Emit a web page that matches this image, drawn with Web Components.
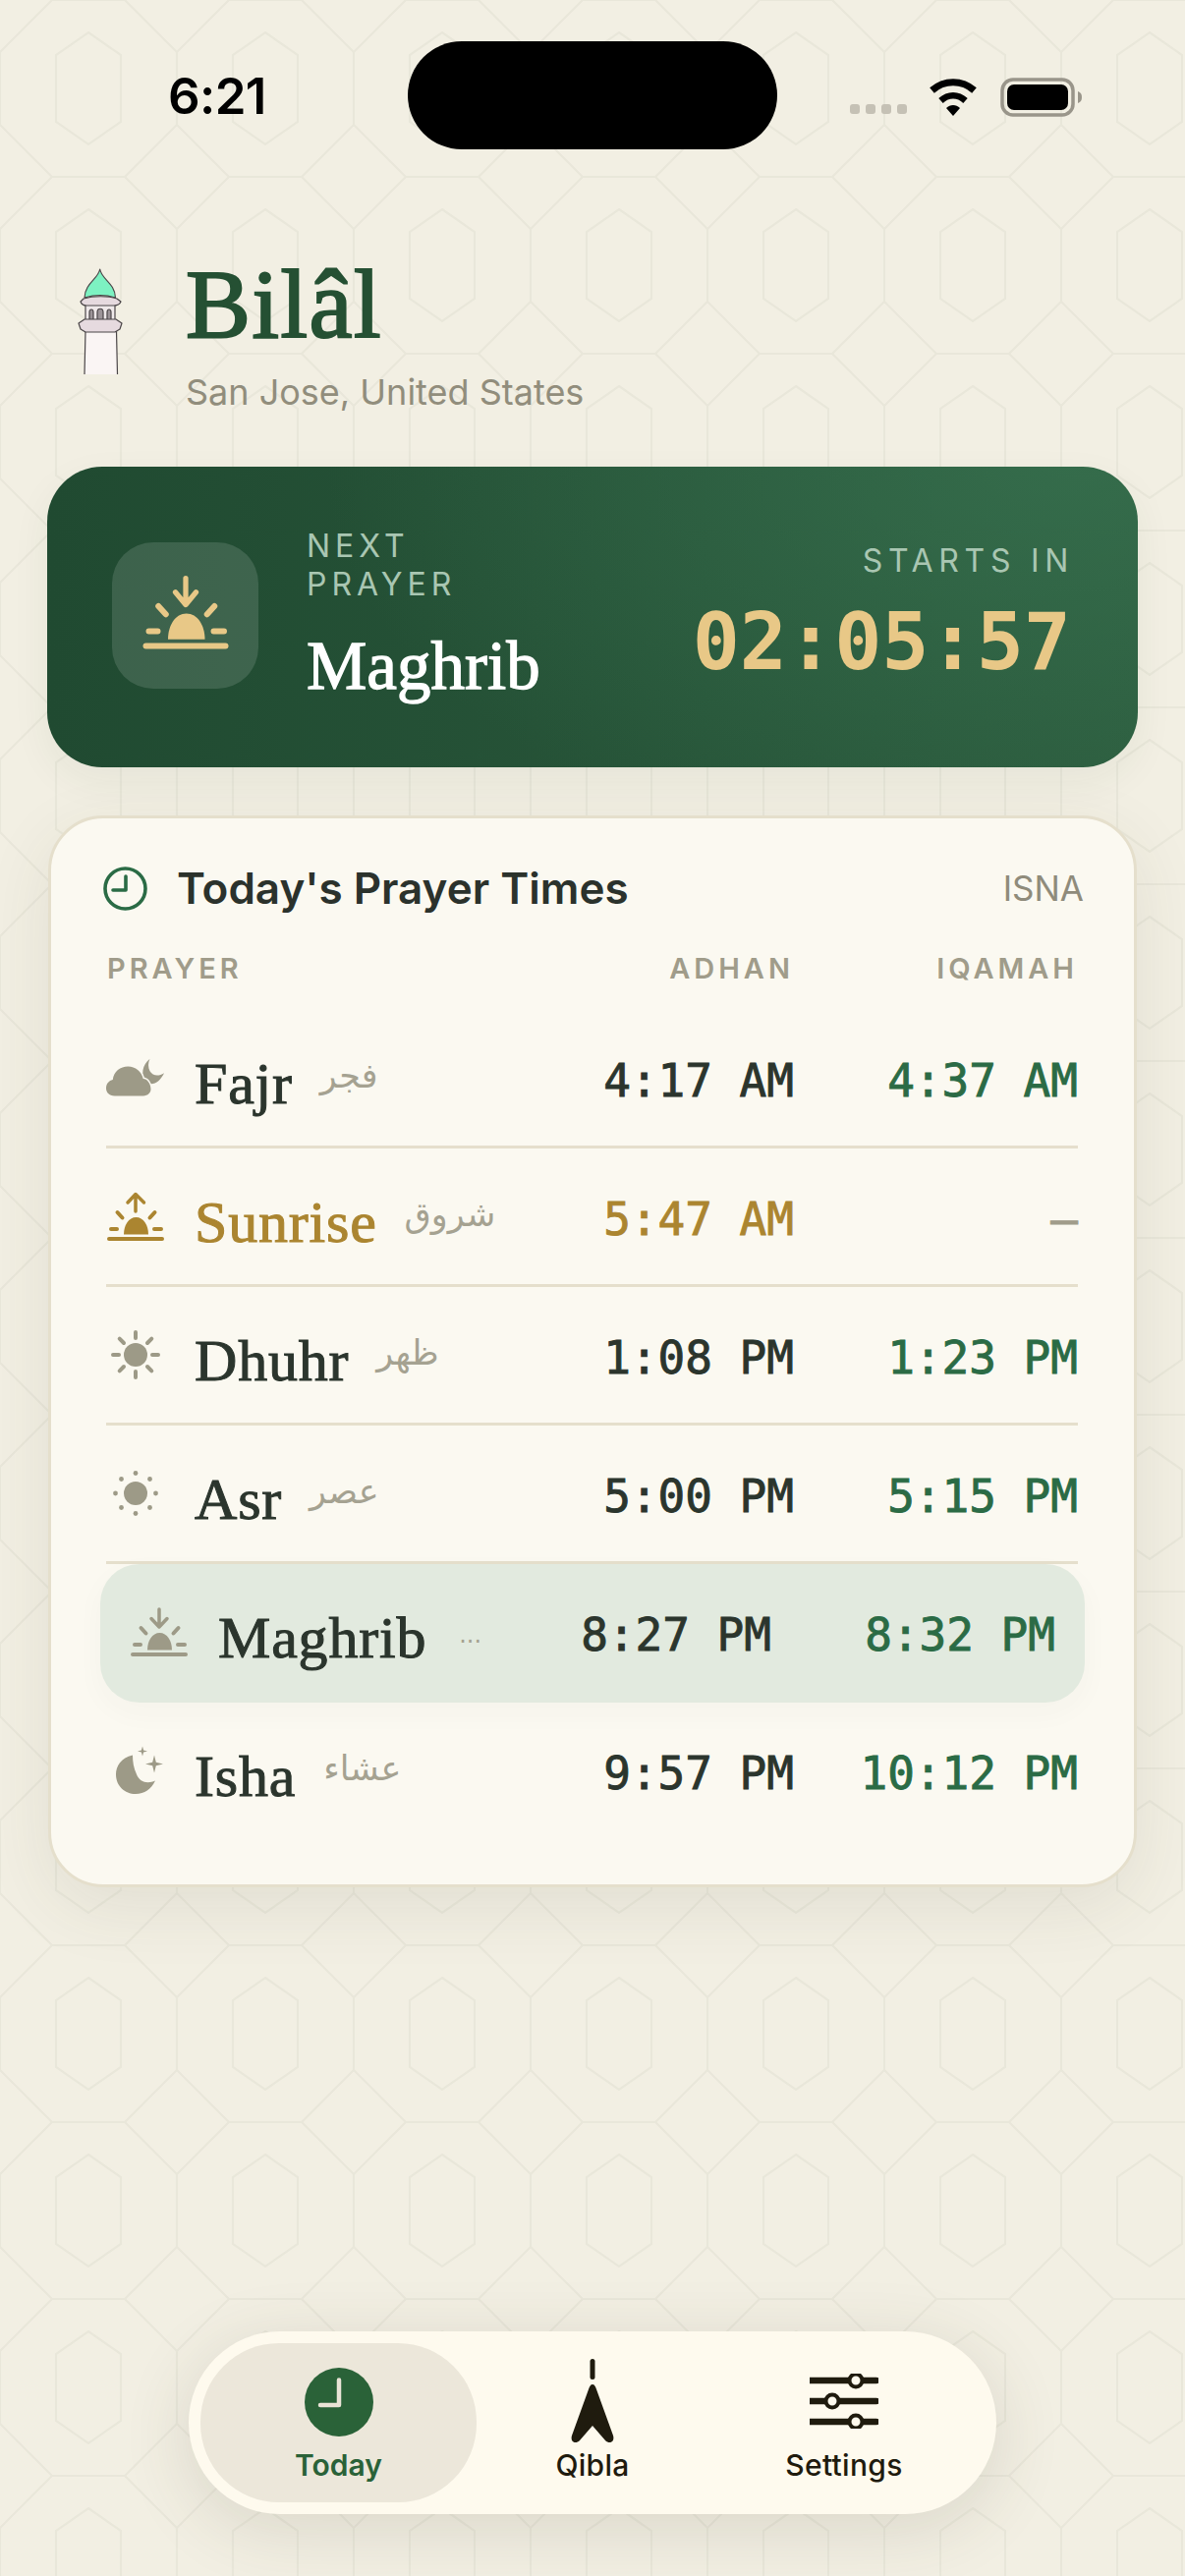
<!DOCTYPE html>
<html lang="en">
<head>
<meta charset="utf-8">
<title>Bilal</title>
<style>
    html, body { margin: 0; padding: 0; }
    body {
        width: 1206px;
        height: 2622px;
        overflow: hidden;
        background-color: #f2efe3;
        background-image: url("data:image/svg+xml,%3Csvg xmlns='http://www.w3.org/2000/svg' width='180' height='180'%3E%3Cpath d='M53 0H127L180 53V127L127 180H53L0 127V53Z M90 33L123 56V124L90 147L57 124V56Z' fill='none' stroke='%23e9e7da' stroke-width='2.2'/%3E%3C/svg%3E");
        font-family: Inter, "Liberation Sans", sans-serif;
    }
</style>
</head>
<body>
    <app-screen>
        <status-bar></status-bar>
        <app-header title="Bilâl" location="San Jose, United States"></app-header>
        <next-prayer name="Maghrib" countdown="02:05:57"></next-prayer>
        <prayer-card title="Today's Prayer Times" method="ISNA">
            <prayer-row icon="fajr" name="Fajr" arabic="فجر" adhan="4:17 AM" iqamah="4:37 AM"></prayer-row>
            <prayer-row icon="sunrise" name="Sunrise" arabic="شروق" adhan="5:47 AM" iqamah="—" accent></prayer-row>
            <prayer-row icon="dhuhr" name="Dhuhr" arabic="ظهر" adhan="1:08 PM" iqamah="1:23 PM"></prayer-row>
            <prayer-row icon="asr" name="Asr" arabic="عصر" adhan="5:00 PM" iqamah="5:15 PM"></prayer-row>
            <prayer-row icon="sunset" name="Maghrib" arabic="..." adhan="8:27 PM" iqamah="8:32 PM" active></prayer-row>
            <prayer-row icon="isha" name="Isha" arabic="عشاء" adhan="9:57 PM" iqamah="10:12 PM" last></prayer-row>
        </prayer-card>
        <bottom-nav>
            <nav-tab label="Today" icon="today" active style="width:281px"></nav-tab>
            <nav-tab label="Qibla" icon="qibla" style="width:236px"></nav-tab>
            <nav-tab label="Settings" icon="settings" style="width:276px"></nav-tab>
        </bottom-nav>
    </app-screen>

<script>
;(function(document){
    'use strict';

    const SERIF = '"Liberation Serif", "Times New Roman", serif';
    const MONO = '"DejaVu Sans Mono", "Liberation Mono", monospace';

    //sun glyph shared by sunrise, maghrib and the hero card
    const sunParts = `
        <path d="M3 49H57" stroke-width="4"/>
        <path d="M18 44.5C18 35 23 27 30.5 27S43 35 43 44.5Z" fill="currentColor" stroke="none"/>
        <path d="M5 39H11M49 39H56M11.500 22L16.500 27.500M49.500 22L44.500 27.500" stroke-width="4"/>
    `;

    const ICONS = {
        fajr: `<svg viewBox="0 0 62 52"><g fill="currentColor">
            <path d="M46 6C38 12 36 24 42 30C48 36 57 30 61 21C55 25 49 24 46 19C44 15 44 10 46 6Z"/>
            <path d="M9 45C3 45 0 41 0 37C0 32 3 29 7 28C8 19 15 14 23 14C31 14 37 19 39 27C43 27 47 32 47 38C47 42 44 45 39 45Z" stroke="#fbf9f1" stroke-width="3" paint-order="stroke"/>
        </g></svg>`,
        sunrise: `<svg viewBox="0 0 60 52" fill="none" stroke="currentColor" stroke-linecap="round" stroke-linejoin="round">
            ${sunParts}<path d="M30 21V4M22 12L30 3.500L38.500 12" stroke-width="3.500"/></svg>`,
        sunset: `<svg viewBox="0 0 60 52" fill="none" stroke="currentColor" stroke-linecap="round" stroke-linejoin="round">
            ${sunParts}<path d="M30 3V20M22 12.500L30 21L38 12.500" stroke-width="3.500"/></svg>`,
        dhuhr: `<svg viewBox="0 0 60 52" fill="none" stroke="currentColor" stroke-width="4" stroke-linecap="round">
            <circle cx="30" cy="26" r="12" fill="currentColor" stroke="none"/>
            <path d="M30 3V9M30 43V49M7 26H13M47 26H53M13.700 9.700L18 14M46.300 9.700L42 14M13.700 42.300L18 38M46.300 42.300L42 38"/></svg>`,
        asr: `<svg viewBox="0 0 60 52" fill="currentColor">
            <circle cx="30" cy="26" r="12"/>
            <circle cx="30" cy="5.500" r="2.400"/><circle cx="30" cy="46.500" r="2.400"/>
            <circle cx="9.500" cy="26" r="2.400"/><circle cx="50.500" cy="26" r="2.400"/>
            <circle cx="15.500" cy="11.500" r="2.400"/><circle cx="44.500" cy="11.500" r="2.400"/>
            <circle cx="15.500" cy="40.500" r="2.400"/><circle cx="44.500" cy="40.500" r="2.400"/></svg>`,
        isha: `<svg viewBox="0 0 60 52" fill="currentColor">
            <path d="M27 10.500C15 13 10 22 10 30C10 42 19 50 30 50C39 50 46 45 50 36.500C42 40 34 38 31 30C28 24 27 17 27 10.500Z"/>
            <path d="M49 10.500L50.800 17.700L58 19.500L50.800 21.300L49 28.500L47.200 21.300L40 19.500L47.200 17.700Z"/>
            <path d="M37 1.500L38.100 5.400L42 6.500L38.100 7.600L37 11.500L35.900 7.600L32 6.500L35.900 5.400Z"/></svg>`,
        today: `<svg viewBox="0 0 70 70"><circle cx="35" cy="35" r="35" fill="#2a6238"/>
            <path d="M35 12.500V38H16" fill="none" stroke="#e9e4d6" stroke-width="4.500" stroke-linecap="round" stroke-linejoin="round"/></svg>`,
        qibla: `<svg viewBox="0 0 70 90" fill="#1f1b0e">
            <rect x="32.500" y="0" width="5" height="21" rx="2.500"/>
            <path d="M35 26C37 26 38 28 39 31L56 78C58 85 52 87 48 83L35 68L22 83C18 87 12 85 14 78L31 31C32 28 33 26 35 26Z"/></svg>`,
        settings: `<svg viewBox="0 0 70 56" fill="none" stroke="#1f1b0e" stroke-linecap="round">
            <path d="M1 7H68M1 28H68M1 49H68" stroke-width="6.500"/>
            <g fill="#fefaee" stroke-width="4"><ellipse cx="47" cy="7" rx="6.500" ry="6.500"/><ellipse cx="23" cy="28" rx="6.500" ry="6.500"/><ellipse cx="47" cy="49" rx="6.500" ry="6.500"/></g></svg>`
    };

    class AppScreen extends HTMLElement {
        constructor(){
            super();
            this.attachShadow({ mode: 'open' }).innerHTML = `
                <style>
                    :host {
                        display: flex;
                        flex-direction: column;
                        width: 1206px;
                        height: 2622px;
                        box-sizing: border-box;
                    }
                </style>
                <slot></slot>
            `;
        }
    }

    class StatusBar extends HTMLElement {
        constructor(){
            super();
            this.attachShadow({ mode: 'open' }).innerHTML = `
                <style>
                    :host {
                        display: flex;
                        align-items: center;
                        height: 110px;
                        margin-top: 42px;
                        padding-left: 171px;
                        font-family: Inter, "Liberation Sans", sans-serif;
                    }
                    .time { width: 244px; font-size: 51px; font-weight: 600; color: #000; letter-spacing: -0.6px; }
                    .island { width: 376px; height: 110px; border-radius: 55px; background: #000; }
                    .signal { display: flex; gap: 6px; margin: 27px 0 0 74px; }
                    .signal i { width: 10px; height: 10px; border-radius: 3px; background: #c5c1b5; }
                    svg { display: block; margin: 4px 0 0 0; }
                    .wifi { margin-left: 22px; }
                    .battery { margin-left: 23px; }
                </style>
                <div class="time">6:21</div>
                <div class="island"></div>
                <div class="signal"><i></i><i></i><i></i><i></i></div>
                <svg class="wifi" width="50" height="38" viewBox="0 0 50 38">
                    <path d="M3.500 12C16 1 34 1 46.500 12" fill="none" stroke="#000" stroke-width="7"/>
                    <path d="M12.500 22.500C20 15.500 30 15.500 37.500 22.500" fill="none" stroke="#000" stroke-width="6.500"/>
                    <path d="M18 30C22 26 28 26 32 30L25 38Z"/>
                </svg>
                <svg class="battery" width="84" height="40" viewBox="0 0 84 40">
                    <rect x="2" y="2" width="72" height="36" rx="11" fill="none" stroke="#99958a" stroke-width="3.500"/>
                    <rect x="7" y="7" width="62" height="26" rx="7"/>
                    <path d="M79 14C82 15 83 17 83 20C83 23 82 25 79 26Z" fill="#99958a"/>
                </svg>
            `;
        }
    }

    class AppHeader extends HTMLElement {
        constructor(){
            super();
            this.attachShadow({ mode: 'open' }).innerHTML = `
                <style>
                    :host { display: flex; height: 150px; margin: 98px 0 75px 50px; }
                    svg { width: 100px; height: 150px; flex: none; }
                    .text { margin-left: 39px; }
                    h1 {
                        margin: 13px 0 0;
                        font: 400 99px/94px ${SERIF};
                        -webkit-text-stroke: 2.2px currentColor;
                        letter-spacing: 1.500px;
                        color: #255033;
                    }
                    p {
                        margin: 21px 0 0;
                        font: 400 36px/42px Inter, "Liberation Sans", sans-serif;
                        color: #918d7c;
                    }
                </style>
                <svg viewBox="0 0 100 150" fill="none" stroke="#4b4648" stroke-width="1.200" stroke-linejoin="round">
                    <path d="M37 87H68.500L69.500 131H36Z" fill="#faf5f4" stroke="none"/>
                    <path d="M37 87L36 131M68.500 87L69.500 131"/>
                    <path d="M51.700 24C53 34 67 38 67.500 53C58 50 46 50 36 53C36.500 38 50 34 51.700 24Z" fill="#7df2c2"/>
                    <rect x="37" y="60" width="30" height="18" fill="#efe9ea"/>
                    <path d="M41 76V68C41 64 45 64 45 68V76ZM49 76V68C49 63 55 63 55 68V76ZM59 76V68C59 64 63 64 63 68V76Z" fill="#9c9498"/>
                    <path d="M35 54C45 51 60 51 69 54L73 57C72 60 68 61 66 61H38C36 61 33 60 32 57Z" fill="#e6dadf"/>
                    <path d="M36 75H68L74 79L72 85L67 88H37L32 85L30 79Z" fill="#e6dadf"/>
                </svg>
                <div class="text">
                    <h1>${this.getAttribute('title')}</h1>
                    <p>${this.getAttribute('location')}</p>
                </div>
            `;
        }
    }

    class NextPrayer extends HTMLElement {
        constructor(){
            super();
            this.attachShadow({ mode: 'open' }).innerHTML = `
                <style>
                    :host {
                        display: flex;
                        align-items: center;
                        box-sizing: border-box;
                        width: 1110px;
                        height: 306px;
                        margin-left: 48px;
                        padding: 0 68px 16px 66px;
                        border-radius: 56px;
                        background:
                            radial-gradient(760px 420px at 94% 0%, rgba(56, 114, 80, 0.72), rgba(56, 114, 80, 0)),
                            linear-gradient(90deg, #204a31, #2c5c3e);
                        box-shadow: 0 14px 40px rgba(40, 60, 40, 0.06);
                        color: #fff;
                    }
                    .icon {
                        display: flex;
                        align-items: center;
                        justify-content: center;
                        flex: none;
                        width: 149px;
                        height: 149px;
                        margin-top: 13px;
                        border-radius: 42px;
                        background: rgba(255, 255, 255, 0.13);
                        color: #e8c887;
                    }
                    .icon svg { width: 90px; height: 78px; margin-top: -8px; }
                    .label {
                        font: 400 32px/39px Inter, "Liberation Sans", sans-serif;
                        letter-spacing: 5px;
                        color: #a9c6b2;
                    }
                    .left { margin-left: 49px; width: 170px; }
                    .name {
                        margin-top: 28px;
                        margin-bottom: -10px;
                        font: 400 69px/72px ${SERIF};
                        -webkit-text-stroke: 1.300px currentColor;
                        white-space: nowrap;
                    }
                    .right { margin-left: auto; margin-top: 6px; text-align: right; }
                    .right .label { margin-right: -3px; letter-spacing: 5.700px; }
                    .count {
                        margin-top: 22px;
                        font: bold 80px/84px ${MONO};
                        color: #e8c887;
                    }
                </style>
                <div class="icon"><svg viewBox="0 0 60 52" fill="none" stroke="currentColor" stroke-linecap="round" stroke-linejoin="round">
                    ${sunParts}<path d="M30 3V20M23 12.500L30 21L37 12.500" stroke-width="3.500"/></svg></div>
                <div class="left">
                    <div class="label">NEXT PRAYER</div>
                    <div class="name">${this.getAttribute('name')}</div>
                </div>
                <div class="right">
                    <div class="label">STARTS IN</div>
                    <div class="count">${this.getAttribute('countdown')}</div>
                </div>
            `;
        }
    }

    class PrayerCard extends HTMLElement {
        constructor(){
            super();
            this.attachShadow({ mode: 'open' }).innerHTML = `
                <style>
                    :host {
                        display: block;
                        box-sizing: border-box;
                        width: 1108px;
                        height: 1091px;
                        margin: 49px 0 0 49px;
                        padding: 42px 57px 0 56px;
                        border: 3px solid #e5dfcc;
                        border-radius: 56px;
                        background: #fbf9f1;
                        box-shadow: 0 20px 70px rgba(70, 65, 40, 0.09);
                        font-family: Inter, "Liberation Sans", sans-serif;
                    }
                    .head { display: flex; align-items: center; height: 58px; margin: 0 -6px 0 -3px; }
                    .head svg { flex: none; width: 45px; height: 45px; }
                    .head h2 { margin: 0 0 0 30px; font-size: 44px; font-weight: 600; color: #2b322c; }
                    .head span { margin-left: auto; font-size: 35px; color: #8f8b7b; }
                    .cols {
                        display: flex;
                        height: 40px;
                        line-height: 40px;
                        margin-top: 33px;
                        margin-bottom: 22px;
                        font-size: 29px;
                        font-weight: 600;
                        letter-spacing: 4px;
                        color: #a09c8a;
                    }
                    .cols .a { margin-left: auto; }
                    .cols .b { width: 289px; text-align: right; }
                    .cols .p { margin-left: 1px; }
                </style>
                <div class="head">
                    <svg viewBox="0 0 45 45" fill="none" stroke="#2a6b45" stroke-width="3.600" stroke-linecap="round" stroke-linejoin="round">
                        <circle cx="22.500" cy="22.500" r="20.500"/><path d="M23 10V24H10"/></svg>
                    <h2>${this.getAttribute('title')}</h2>
                    <span>${this.getAttribute('method')}</span>
                </div>
                <div class="cols"><span class="p">PRAYER</span><span class="a">ADHAN</span><span class="b">IQAMAH</span></div>
                <slot></slot>
            `;
        }
    }

    class PrayerRow extends HTMLElement {
        constructor(){
            super();
            const accent = this.hasAttribute('accent');
            const iqamah = this.getAttribute('iqamah');
            const noIqamah = iqamah === '—';
            this.attachShadow({ mode: 'open' }).innerHTML = `
                <style>
                    :host {
                        display: flex;
                        align-items: center;
                        box-sizing: border-box;
                        height: 141px;
                        border-bottom: 3px solid #e5dfcc;
                    }
                    :host([last]) { border-bottom: none; padding-bottom: 3px; }
                    :host([active]) {
                        margin: 0 -7px 0 -6px;
                        padding: 0 30px 3px;
                        border-bottom: none;
                        border-radius: 40px;
                        background: #e2eadf;
                        box-shadow: 0 10px 30px rgba(50, 70, 50, 0.03);
                    }
                    .icon { flex: none; width: 60px; height: 52px; color: ${accent ? '#ab8530' : '#9d9a87'}; }
                    .icon svg { display: block; width: 100%; height: 100%; overflow: visible; }
                    .name {
                        margin-left: 30px;
                        font: 400 60px/70px ${SERIF};
                        -webkit-text-stroke: 1px currentColor;
                        letter-spacing: 0.8px;
                        color: ${accent ? '#ab8530' : '#2b352d'};
                        position: relative;
                        top: 6px;
                    }
                    .arabic {
                        margin-left: 28px;
                        font: 400 35px/40px "DejaVu Sans", "Noto Sans", sans-serif;
                        color: #a5a291;
                        position: relative;
                        top: -2px;
                    }
                    :host([active]) .arabic { font-size: 24px; margin-left: 33px; top: 3px; }
                    .time {
                        font: 400 46px/60px ${MONO};
                        -webkit-text-stroke: 0.9px currentColor;
                        white-space: nowrap;
                        position: relative;
                        top: 3px;
                    }
                    .adhan { margin-left: auto; color: ${accent ? '#ab8530' : '#2b352d'}; }
                    .iqamah { flex: none; width: 289px; text-align: right; color: ${noIqamah ? '#a09c8a' : '#2b6b45'}; }
                </style>
                <div class="icon">${ICONS[this.getAttribute('icon')]}</div>
                <span class="name">${this.getAttribute('name')}</span>
                <span class="arabic">${this.getAttribute('arabic')}</span>
                <span class="time adhan">${this.getAttribute('adhan')}</span>
                <span class="time iqamah">${iqamah}</span>
            `;
        }
    }

    class BottomNav extends HTMLElement {
        constructor(){
            super();
            this.attachShadow({ mode: 'open' }).innerHTML = `
                <style>
                    :host {
                        display: flex;
                        align-items: center;
                        box-sizing: border-box;
                        width: 822px;
                        height: 186px;
                        margin: auto 0 63px 192px;
                        padding: 0 12px;
                        border-radius: 93px;
                        background: #fefaee;
                        box-shadow: 0 14px 70px rgba(70, 65, 40, 0.14);
                    }
                </style>
                <slot></slot>
            `;
        }
    }

    class NavTab extends HTMLElement {
        constructor(){
            super();
            const icon = this.getAttribute('icon');
            const boxes = { today: 'width:70px;height:70px;margin-top:25px', qibla: 'width:70px;height:90px;margin-top:16px', settings: 'width:70px;height:56px;margin-top:31px' };
            this.attachShadow({ mode: 'open' }).innerHTML = `
                <style>
                    :host {
                        display: flex;
                        flex-direction: column;
                        align-items: center;
                        box-sizing: border-box;
                        height: 162px;
                        border-radius: 80px;
                        font: 500 30px/40px Inter, "Liberation Sans", sans-serif;
                        letter-spacing: 0.3px;
                        color: #1f1b0e;
                    }
                    :host([active]) { background: #ece7da; color: #2a6238; font-weight: 600; letter-spacing: 0; }
                    .box { display: block; flex: none; ${boxes[icon]} }
                    .box svg { display: block; width: 100%; height: 100%; }
                    .label { position: absolute; top: 104px; }
                    .wrap { position: relative; display: flex; flex-direction: column; align-items: center; height: 162px; }
                </style>
                <div class="wrap">
                    <div class="box">${ICONS[icon]}</div>
                    <div class="label">${this.getAttribute('label')}</div>
                </div>
            `;
        }
    }

    customElements.define('app-screen', AppScreen);
    customElements.define('status-bar', StatusBar);
    customElements.define('app-header', AppHeader);
    customElements.define('next-prayer', NextPrayer);
    customElements.define('prayer-card', PrayerCard);
    customElements.define('prayer-row', PrayerRow);
    customElements.define('bottom-nav', BottomNav);
    customElements.define('nav-tab', NavTab);

})(document);
</script>
</body>
</html>
